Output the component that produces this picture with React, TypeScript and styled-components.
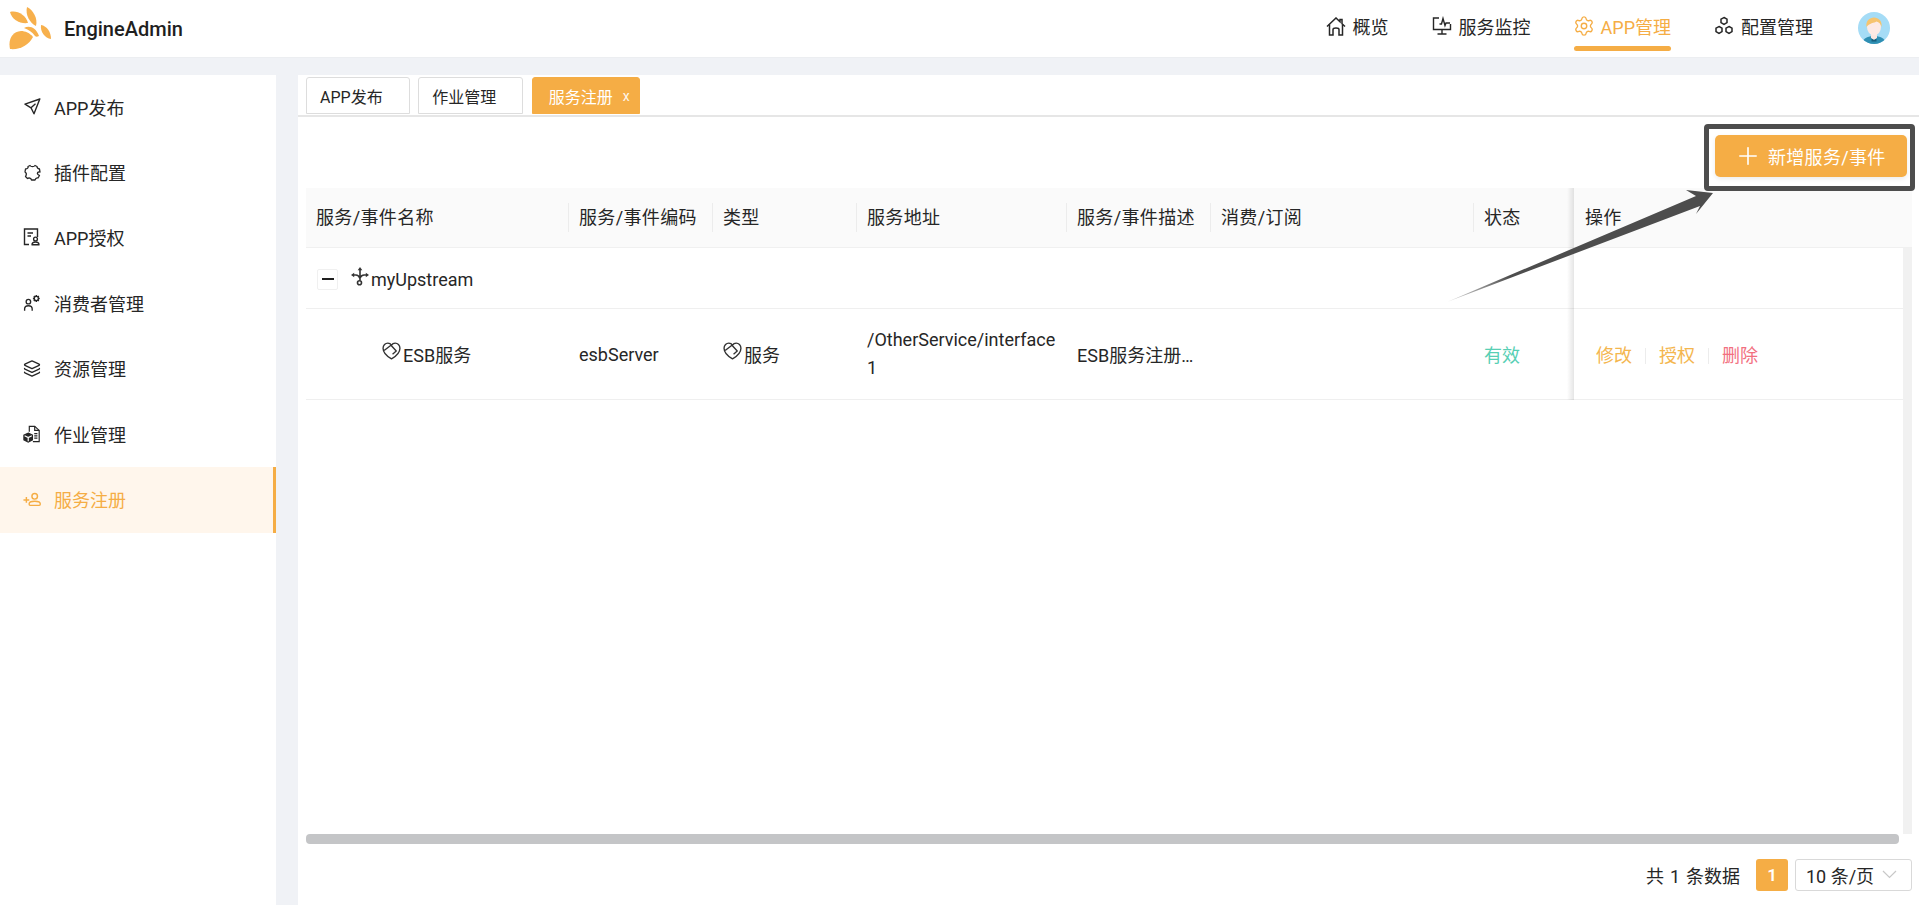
import React, { FC, ReactNode } from "react";
import styled, { createGlobalStyle } from "styled-components";
import { Layers, Plus, Settings } from "lucide-react";

const ORANGE = "#f5ad45";
const TEXT = "#262626";

const GlobalStyle = createGlobalStyle`
  html, body { margin: 0; padding: 0; height: 100%; background: #f0f2f6; overflow: hidden; }
  body, button { font-family: Roboto, "Noto Sans CJK SC", sans-serif; color: ${TEXT}; }
  * { box-sizing: border-box; }
`;

const Page = styled.div`
  position: relative;
  display: flex;
  flex-direction: column;
  height: 905px;
`;

const Header = styled.header`
  display: flex;
  align-items: center;
  justify-content: space-between;
  height: 58px;
  padding: 0 29px 0 9px;
  background: #fff;
  border-bottom: 1px solid #eceef1;
`;

const Brand = styled.div`
  display: flex;
  align-items: center;
  gap: 11px;
  font-size: 20px;
  font-weight: 500;
  color: #1f1f1f;
`;

const TopNav = styled.nav`
  display: flex;
  align-items: center;
  gap: 43px;
  height: 100%;
`;

const NavItem = styled.a<{ $active?: boolean }>`
  position: relative;
  display: flex;
  align-items: center;
  gap: 7px;
  height: 100%;
  padding-bottom: 5px;
  font-size: 18px;
  color: ${(p) => (p.$active ? ORANGE : TEXT)};
  ${(p) =>
    p.$active &&
    `&::after {
      content: "";
      position: absolute;
      left: 0;
      right: 0;
      top: 46px;
      height: 5px;
      border-radius: 3px;
      background: ${ORANGE};
    }`}
  & > .gear {
    margin: 0 -1px;
  }
`;

const Avatar = styled.svg`
  width: 32px;
  height: 32px;
  margin-left: 2px;
  margin-top: -2px;
`;

const Body = styled.div`
  display: flex;
  flex: 1;
  gap: 22px;
  min-height: 0;
  padding-top: 17px;
`;

const Sidebar = styled.aside`
  flex: 0 0 276px;
  background: #fff;
`;

const MenuItem = styled.a<{ $active?: boolean }>`
  display: flex;
  align-items: center;
  gap: 13px;
  height: 65.4px;
  padding: 0 0 2px 23px;
  font-size: 18px;
  color: ${(p) => (p.$active ? ORANGE : TEXT)};
  background: ${(p) => (p.$active ? "#fff6ec" : "transparent")};
  border-right: 3px solid ${(p) => (p.$active ? ORANGE : "transparent")};
`;

const MenuIcon = styled.span`
  display: flex;
  align-items: center;
  justify-content: center;
  width: 18px;
  height: 18px;
`;

const Content = styled.main`
  flex: 1;
  display: flex;
  flex-direction: column;
  min-width: 0;
  background: #fff;
`;

const TabBar = styled.div`
  display: flex;
  gap: 8.5px;
  height: 42px;
  padding: 2px 8px 0;
  border-bottom: 2px solid #e6e6e6;
`;

const Tab = styled.div<{ $active?: boolean }>`
  display: flex;
  align-items: center;
  height: 37px;
  padding: ${(p) => (p.$active ? "0 9px 0 16px" : "0 26px 0 13px")};
  gap: 10px;
  font-size: 16px;
  border-radius: 3px 3px 0 0;
  border: 1px solid ${(p) => (p.$active ? ORANGE : "#dddddd")};
  background: ${(p) => (p.$active ? ORANGE : "#fff")};
  color: ${(p) => (p.$active ? "#fff" : TEXT)};
`;

const TabClose = styled.span`
  font-size: 14px;
  line-height: 1;
  opacity: 0.9;
`;

const Toolbar = styled.div`
  display: flex;
  justify-content: flex-end;
  padding: 18px 12px 11px 0;
`;

const PrimaryButton = styled.button`
  display: flex;
  align-items: center;
  gap: 6px;
  width: 192px;
  height: 42px;
  padding: 0 0 0 19px;
  border: none;
  border-radius: 5px;
  background: ${ORANGE};
  color: #fff;
  font-size: 18px;
  letter-spacing: 0.3px;
  box-shadow: 0 2px 5px rgba(0, 0, 0, 0.08);
`;

const TableArea = styled.div`
  flex: 1;
  display: flex;
  flex-direction: column;
  min-height: 0;
  margin: 0 7px 0 8px;
`;

const COLUMNS = "262px 144px 144px 210px 144px 263px 101px 1fr";
const FIXED_SHADOW = `
  &::after {
    content: "";
    position: absolute;
    left: -7px;
    top: 0;
    bottom: -1px;
    width: 7px;
    background: linear-gradient(to left, rgba(0, 0, 0, 0.1), rgba(0, 0, 0, 0));
  }
`;

const HeadRow = styled.div`
  display: grid;
  grid-template-columns: ${COLUMNS};
  height: 60px;
  background: #fafafa;
  border-bottom: 1px solid #f0f0f0;
  font-size: 18px;
  letter-spacing: 0.35px;
`;

const HeadCell = styled.div<{ $fixed?: boolean }>`
  position: relative;
  display: flex;
  align-items: center;
  padding: 0 10px 3px 11px;
  &:first-child { padding-left: 10px; }
  &:not(:first-child)::before {
    content: "";
    position: absolute;
    left: 0;
    top: 15px;
    height: 29px;
    width: 1px;
    background: #ececec;
    display: ${(p) => (p.$fixed ? "none" : "block")};
  }
  ${(p) => p.$fixed && FIXED_SHADOW}
`;

const BodyScroll = styled.div`
  flex: 1;
  min-height: 0;
  background: linear-gradient(#f1f1f1, #f1f1f1) right top / 9px 100% no-repeat;
`;

const Row = styled.div<{ $height: number }>`
  display: grid;
  grid-template-columns: ${COLUMNS};
  height: ${(p) => p.$height}px;
  margin-right: 9px;
  border-bottom: 1px solid #efefef;
  font-size: 18px;
  background: #fff;
`;

const Cell = styled.div<{ $indent?: number; $fixed?: boolean; $span?: number }>`
  position: relative;
  display: flex;
  align-items: center;
  min-width: 0;
  padding: 0 4px 0 ${(p) => p.$indent ?? 11}px;
  ${(p) => p.$span && `grid-column: 1 / span ${p.$span};`}
  ${(p) => p.$fixed && FIXED_SHADOW}
`;

const NameGroup = styled.div`
  display: flex;
  align-items: center;
  padding-top: 2px;
`;

const Expander = styled.span`
  display: flex;
  align-items: center;
  justify-content: center;
  width: 21px;
  height: 21px;
  margin-right: 13px;
  border: 1px solid #f0f0f0;
  border-radius: 2px;
  &::before {
    content: "";
    width: 12px;
    height: 2.5px;
    background: #1f1f1f;
  }
`;

const RowIcon = styled.svg`
  flex: none;
  align-self: center;
  margin: -6px 2px 0 0;
`;

const Address = styled.span`
  line-height: 28px;
`;

const Description = styled.span`
  white-space: nowrap;
`;

const Status = styled.span`
  color: #58cfb4;
`;

const Actions = styled.div`
  display: flex;
  align-items: center;
  padding-left: 11px;
  & > a + a::before {
    content: "";
    display: inline-block;
    width: 1px;
    height: 16px;
    margin: 0 13px;
    vertical-align: -2px;
    background: #ececec;
  }
`;

const ActionLink = styled.a<{ $danger?: boolean }>`
  color: ${(p) => (p.$danger ? "#f2707f" : "#f4b64e")};
`;

const HScrollThumb = styled.div`
  flex: none;
  height: 10px;
  margin-right: 13px;
  border-radius: 4px;
  background: #c4c5c7;
`;

const Footer = styled.footer`
  flex: none;
  display: flex;
  align-items: center;
  justify-content: flex-end;
  gap: 16px;
  height: 61px;
  padding: 0 7px 0 0;
  font-size: 18px;
`;

const Total = styled.span`
  word-spacing: 1.5px;
`;

const PageNumber = styled.span`
  display: flex;
  align-items: center;
  justify-content: center;
  width: 32px;
  height: 32px;
  border-radius: 3px;
  background: ${ORANGE};
  color: #fff;
  font-weight: 600;
  font-size: 17px;
`;

const SizeSelect = styled.div`
  display: flex;
  align-items: center;
  justify-content: space-between;
  width: 117px;
  height: 32px;
  margin-left: -9px;
  padding: 0 14px 0 10px;
  border: 1px solid #d9d9d9;
  border-radius: 3px;
`;

const Annotation = styled.div`
  position: absolute;
  left: 1704px;
  top: 124px;
  width: 211px;
  height: 67px;
  border: 5px solid #4d4d4d;
  border-radius: 4px;
  pointer-events: none;
`;

const ArrowOverlay = styled.svg`
  position: absolute;
  left: 0;
  top: 0;
  pointer-events: none;
`;

const Logo = () => (
  <svg width="44" height="44" viewBox="0 0 44 44" fill="#f7b04c">
    <path d="M1 5C8 3 17 8 19 16C11 17 3 13 1 5Z" />
    <path d="M18 0C24 3 29 11 27 19C21 16 16 8 18 0Z" />
    <path d="M32 18C38 19 42 25 42 32C36 31 31 25 32 18Z" />
    <path d="M1 42C-1 32 3 25 12 24C16 24 21 26 24 30C20 38 11 43 1 42Z" />
    <path d="M15 21C20 18 27 20 30 29C28 30 27 30 26 29C23 25 20 23 15 21Z" />
  </svg>
);

const HomeIcon = () => (
  <svg width="20" height="19" viewBox="0 0 20 19" fill="none" stroke="currentColor" strokeWidth="1.5">
    <path d="M1 9.500L10 1L14 4.800V2.500H16V6.700L19 9.500" />
    <path d="M3.500 7.500V18H7V12.500C7 10.500 13 10.500 13 12.500V18H16.500V7.500" />
  </svg>
);

const ClusterIcon = () => (
  <svg width="20" height="20" viewBox="0 0 20 20" fill="none" stroke="currentColor" strokeWidth="1.5">
    <path d="M10 1.500l3 1.700v3.400l-3 1.700-3-1.700V3.200z" />
    <path d="M5 10.500l3 1.700v3.400l-3 1.700-3-1.700v-3.400z" />
    <path d="M15 10.500l3 1.700v3.400l-3 1.700-3-1.700v-3.400z" />
  </svg>
);

const MonitorIcon = () => (
  <svg width="20" height="20" viewBox="0 0 20 20" fill="none" stroke="currentColor" strokeWidth="1.4">
    <path d="M7 2H1.500v11.500h17V8" />
    <path d="M7.500 8h2l1.500-5.500 2 7 1-2.500h4" />
    <path d="M10 13.500V18M5.500 18h9" />
  </svg>
);

const PlaneIcon = () => (
  <svg width="17" height="17" viewBox="0 0 17 17" fill="none" stroke="currentColor" strokeWidth="1.4" strokeLinejoin="round">
    <path d="M15.800 1L1 6.200L7 9.800L10 15.800Z" />
    <path d="M7 9.800L11.500 5.800" />
  </svg>
);

const PluginIcon = () => (
  <svg width="17" height="17" viewBox="0 0 17 17" fill="none" stroke="currentColor" strokeWidth="1.3" strokeLinejoin="round">
    <path d="M6 1.500C7 3 10 3 11 1.500L13 2.500C13 4 13.500 4.500 15.500 5L16 8C14 7.500 12.500 9 14 10.500L15.500 11.500L14 14C12.500 13.500 11.500 14.500 11 16L7.500 16C7 14 5 13.500 3.500 14.500L1.500 12.500C2.500 11 2.500 9 1 8L1.500 5C3.500 5 4.500 3.500 4 2.500Z" />
  </svg>
);

const LicenseIcon = () => (
  <svg width="18" height="18" viewBox="0 0 18 18" fill="none" stroke="currentColor" strokeWidth="1.4">
    <path d="M6 16.500H1.500V1H14.500V9" />
    <path d="M4.500 5H10M4.500 8H8" />
    <circle cx="12.500" cy="11" r="1.900" />
    <path d="M8.500 16.800H16.500M9 16.800C9 14.500 10.500 14 12.500 14S16 14.500 16 16.800" />
  </svg>
);

const ConsumerIcon = () => (
  <svg width="20" height="20" viewBox="0 0 20 20" fill="none" stroke="currentColor" strokeWidth="1.5">
    <circle cx="6" cy="8.500" r="2.500" />
    <path d="M1.800 18.500V16.500C1.800 14.500 3.500 13 6 13S10.200 14.500 10.200 16.500V18.500" />
    <circle cx="14.800" cy="5" r="2.300" />
    <path d="M14.800 1.200V2.400M14.800 7.600V8.800M11 5H12.200M17.400 5H18.600M12.100 2.300L13 3.200M16.600 6.800L17.500 7.700M17.500 2.300L16.600 3.200M13 6.800L12.100 7.700" strokeWidth="1.700" />
  </svg>
);

const JobIcon = () => (
  <svg width="20" height="20" viewBox="0 0 20 20" fill="none" stroke="currentColor" strokeWidth="1.3">
    <path d="M7 7.500V1.500H13L18 6V18.500H11" />
    <path d="M13 1.500V6H18M12.500 9.500H16M12.500 12H16M12.500 14.500H16" />
    <path d="M5.800 9L10.500 11.300V16.500L5.800 19L1 16.500V11.300Z" fill="currentColor" />
    <path d="M1.800 12L5.800 14L9.800 12M5.800 14V18" stroke="#fff" />
  </svg>
);

const AddUserIcon = () => (
  <svg width="20" height="15" viewBox="0 0 20 15" fill="none" stroke="currentColor" strokeWidth="1.6">
    <circle cx="13" cy="4" r="3.100" />
    <path d="M6.800 12.500C6.800 10.500 9.500 9.500 13 9.500S19.200 10.500 19.200 12.500C19.200 13.500 18.700 14 18 14H8C7.300 14 6.800 13.500 6.800 12.500Z" />
    <path d="M0.500 8H7M3.750 4.800V11.200" />
  </svg>
);

// heart with a swoosh in it, used for services
const ServiceIcon = () => (
  <RowIcon width="19" height="18" viewBox="0 0 18 17" fill="none" stroke="#333" strokeWidth="1.3" strokeLinejoin="round">
    <path d="M9 16C4 13 1 9.500 1 5.800C1 3 3.200 1 5.500 1C6.900 1 8.200 1.700 9 3C9.800 1.700 11.100 1 12.500 1C14.800 1 17 3 17 5.800C17 9.500 14 13 9 16Z" />
    <path d="M2 8L8.500 3L13.500 8.500L10 11.500" />
  </RowIcon>
);

const UpstreamIcon = () => (
  <RowIcon width="18" height="19" viewBox="0 0 18 19" fill="none" stroke="#333" strokeWidth="1.6">
    <path d="M9 3V13.500M3 8H5C6.500 8 8 9 9 11.500M15 8H13C11.500 8 10 9 9 11" />
    <path d="M9 0L11.300 3.200H6.700Z" fill="#333" stroke="none" />
    <path d="M0 8L3.200 5.700V10.300Z" fill="#333" stroke="none" />
    <path d="M18 8L14.800 5.700V10.300Z" fill="#333" stroke="none" />
    <circle cx="8.500" cy="15.800" r="2" />
  </RowIcon>
);

const Chevron = () => (
  <svg width="15" height="9" viewBox="0 0 15 9" fill="none" stroke="#c8c8c8" strokeWidth="1.2">
    <path d="M1 1L7.500 7.500L14 1" />
  </svg>
);

const UserAvatar = () => (
  <Avatar viewBox="0 0 32 32">
    <defs>
      <clipPath id="avatar-clip">
        <circle cx="16" cy="16" r="16" />
      </clipPath>
    </defs>
    <g clipPath="url(#avatar-clip)">
      <rect width="32" height="32" fill="#a5dcf6" />
      <path d="M4 32c1-6 6-8 12-8s11 2 12 8z" fill="#2f8fb3" />
      <path d="M13 21h6v5l-3 2-3-2z" fill="#fbe6df" />
      <ellipse cx="16" cy="15" rx="7" ry="8.500" fill="#fdeae4" />
      <path d="M8.500 15c-1-6 3-9.500 7.500-9.500s8.500 3.500 7.500 9.500c-.8-3-2.500-5-5-5.500-2 1.500-7.500 1.500-10 5.500z" fill="#f6c46e" />
      <path d="M13.500 26.500l2.500 1.500 2.500-1.500v3h-5z" fill="#17607f" />
    </g>
  </Avatar>
);

type MenuEntry = { label: string; icon: ReactNode; active?: boolean };

const menu: MenuEntry[] = [
  { label: "APP发布", icon: <PlaneIcon /> },
  { label: "插件配置", icon: <PluginIcon /> },
  { label: "APP授权", icon: <LicenseIcon /> },
  { label: "消费者管理", icon: <ConsumerIcon /> },
  { label: "资源管理", icon: <Layers size={19} strokeWidth={1.7} /> },
  { label: "作业管理", icon: <JobIcon /> },
  { label: "服务注册", icon: <AddUserIcon />, active: true },
];

const columns = ["服务/事件名称", "服务/事件编码", "类型", "服务地址", "服务/事件描述", "消费/订阅", "状态"];

const App: FC = () => (
  <Page>
    <GlobalStyle />
    <Header>
      <Brand>
        <Logo />
        <span>EngineAdmin</span>
      </Brand>
      <TopNav>
        <NavItem>
          <HomeIcon />
          概览
        </NavItem>
        <NavItem>
          <MonitorIcon />
          服务监控
        </NavItem>
        <NavItem $active>
          <Settings className="gear" size={22} strokeWidth={1.5} />
          APP管理
        </NavItem>
        <NavItem>
          <ClusterIcon />
          配置管理
        </NavItem>
        <UserAvatar />
      </TopNav>
    </Header>

    <Body>
      <Sidebar>
        {menu.map((item) => (
          <MenuItem key={item.label} $active={item.active}>
            <MenuIcon>{item.icon}</MenuIcon>
            {item.label}
          </MenuItem>
        ))}
      </Sidebar>

      <Content>
        <TabBar>
          <Tab>APP发布</Tab>
          <Tab>作业管理</Tab>
          <Tab $active>
            服务注册
            <TabClose>x</TabClose>
          </Tab>
        </TabBar>

        <Toolbar>
          <PrimaryButton>
            <Plus size={28} strokeWidth={1.4} />
            新增服务/事件
          </PrimaryButton>
        </Toolbar>

        <TableArea>
          <HeadRow>
            {columns.map((c) => (
              <HeadCell key={c}>{c}</HeadCell>
            ))}
            <HeadCell $fixed>操作</HeadCell>
          </HeadRow>
          <BodyScroll>
            <Row $height={61}>
              <Cell $span={7}>
                <NameGroup>
                  <Expander />
                  <UpstreamIcon />
                  myUpstream
                </NameGroup>
              </Cell>
              <Cell $fixed />
            </Row>
            <Row $height={91}>
              <Cell $indent={76}>
                <ServiceIcon />
                ESB服务
              </Cell>
              <Cell>esbServer</Cell>
              <Cell>
                <ServiceIcon />
                服务
              </Cell>
              <Cell>
                <Address>
                  /OtherService/interface
                  <br />1
                </Address>
              </Cell>
              <Cell>
                <Description>ESB服务注册…</Description>
              </Cell>
              <Cell />
              <Cell>
                <Status>有效</Status>
              </Cell>
              <Cell $fixed>
                <Actions>
                  <ActionLink>修改</ActionLink>
                  <ActionLink>授权</ActionLink>
                  <ActionLink $danger>删除</ActionLink>
                </Actions>
              </Cell>
            </Row>
          </BodyScroll>
          <HScrollThumb />
        </TableArea>

        <Footer>
          <Total>共 1 条数据</Total>
          <PageNumber>1</PageNumber>
          <SizeSelect>
            10 条/页
            <Chevron />
          </SizeSelect>
        </Footer>
      </Content>
    </Body>

    <Annotation />
    <ArrowOverlay width="1919" height="905" viewBox="0 0 1919 905">
      <defs>
        <linearGradient id="arrow-fade" x1="1447" y1="302" x2="1510" y2="275" gradientUnits="userSpaceOnUse">
          <stop offset="0" stopColor="#4d4d4d" stopOpacity="0.2" />
          <stop offset="1" stopColor="#4d4d4d" />
        </linearGradient>
      </defs>
      <path d="M1447 302L1696 196L1686 190L1713 193L1696 214L1700 206Z" fill="url(#arrow-fade)" />
    </ArrowOverlay>
  </Page>
);

export default App;
